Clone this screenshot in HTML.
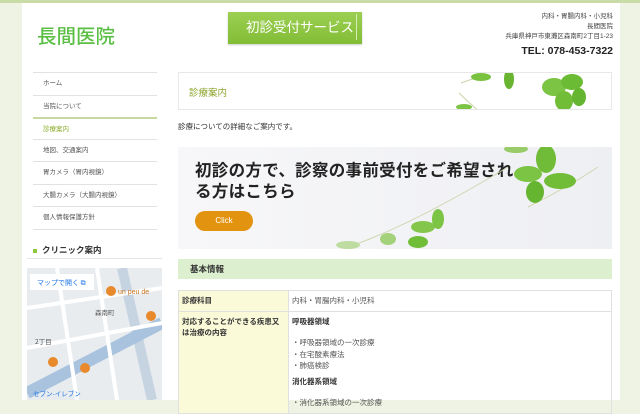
<!DOCTYPE html>
<html><head><meta charset="utf-8"><style>
*{margin:0;padding:0;box-sizing:border-box}
body{width:640px;height:400px;overflow:hidden;background:#eef3e3;font-family:"Liberation Sans","Noto Sans CJK JP",sans-serif;position:relative;color:#333}
.topbar{position:absolute;left:0;top:0;width:640px;height:3px;background:#c9dca8}
.wrap{position:absolute;left:22px;top:3px;width:598px;height:397px;background:#fff}
.a{position:absolute}
.logo{left:37px;top:20px;font-size:19.5px;color:#5cbf45;font-weight:500}
.btn{left:228px;top:12px;width:134px;height:32px;background:linear-gradient(#9ccf52,#82bd36);color:#fff;font-size:13.5px;line-height:32px;padding-left:18px;box-shadow:0 1px 2px rgba(0,0,0,.2)}
.btn:after{content:"";position:absolute;right:5px;top:2px;width:1px;height:26px;background:#d8ecb8}
.info{right:27px;top:12px;text-align:right;font-size:6.5px;line-height:10px;color:#444}
.tel{right:27px;top:45px;font-size:10.5px;font-weight:bold;color:#222}
.menu{left:33px;top:72px;width:124px;border-top:1px solid #e2e2e2}
.menu div{height:22.5px;line-height:22px;font-size:6.5px;color:#555;padding-left:10px;border-bottom:1px solid #e2e2e2}
.menu .act{color:#8aac2a;border-top:2px solid #c8d9a0;margin-top:-1px}
.ct{left:33px;top:244px;font-size:8.5px;font-weight:bold;color:#333}
.ct:before{content:"";display:inline-block;width:4px;height:4px;background:#8dc63f;margin-right:5px;vertical-align:middle}
.map{left:27px;top:268px;width:135px;height:132px;background:#e8ebee;overflow:hidden}
.title{left:178px;top:72px;width:434px;height:38px;border:1px solid #e8e8e8;overflow:hidden}
.title span{position:absolute;left:10px;top:12px;font-size:9.5px;color:#8ea52e}
.desc{left:178px;top:121px;font-size:7.5px;color:#333}
.banner{left:178px;top:147px;width:434px;height:102px;background:linear-gradient(90deg,#f7f7f9,#eeeff3);overflow:hidden}
.banner .t{position:absolute;left:17px;top:14px;font-size:16.5px;font-weight:bold;line-height:21px;color:#222;letter-spacing:.3px}
.click{position:absolute;left:17px;top:64px;width:58px;height:20px;border-radius:10px;background:#e2930f;color:#fff;font-size:8px;text-align:center;line-height:20px}
.kh{left:178px;top:259px;width:434px;height:20px;background:#dcefce;font-size:8.5px;font-weight:bold;line-height:20px;padding-left:12px;color:#333}
table{position:absolute;left:178px;top:290px;width:434px;border-collapse:collapse;font-size:7.5px}
td{border:1px solid #e0e0e0;padding:4px 3px;vertical-align:top;line-height:11.5px}
td.h{width:110px;background:#fafad9;font-weight:bold;color:#333}
td.v{color:#555}
</style></head><body>
<div class="topbar"></div>
<div class="wrap"></div>
<div class="a logo">長間医院</div>
<div class="a btn">初診受付サービス</div>
<div class="a info">内科・胃腸内科・小児科<br>長間医院<br>兵庫県神戸市東灘区森南町2丁目1-23</div>
<div class="a tel">TEL: 078-453-7322</div>
<div class="a menu">
<div>ホーム</div><div>当院について</div><div class="act">診療案内</div><div>地図、交通案内</div><div>胃カメラ（胃内視鏡）</div><div>大腸カメラ（大腸内視鏡）</div><div>個人情報保護方針</div>
</div>
<div class="a ct">クリニック案内</div>
<div class="a" style="left:27px;top:258px;width:135px;height:1px;background:#e5e5e5"></div>
<div class="a map"><svg width="135" height="132">
<rect width="135" height="132" fill="#e9ecef"/>
<path d="M95 0 L125 132" stroke="#c6d4e2" stroke-width="10"/>
<path d="M0 125 L135 55" stroke="#a9c3de" stroke-width="12"/>
<path d="M0 40 L135 20 M0 80 L135 55 M30 0 L50 132 M70 0 L90 132" stroke="#fff" stroke-width="4"/>
<rect x="3" y="6" width="64" height="16" fill="#fff"/>
<text x="10" y="17" font-size="7" fill="#1a73e8" font-family="Noto Sans CJK JP">マップで開く ⧉</text>
<circle cx="84" cy="23" r="5" fill="#e8892b"/><text x="91" y="26" font-size="7" fill="#c8761f">un peu de</text>
<text x="68" y="47" font-size="6.5" fill="#555" font-family="Noto Sans CJK JP">森南町</text>
<text x="8" y="76" font-size="6.5" fill="#555" font-family="Noto Sans CJK JP">2丁目</text>
<circle cx="124" cy="48" r="5" fill="#e8892b"/><circle cx="26" cy="94" r="5" fill="#e8892b"/><circle cx="58" cy="100" r="5" fill="#e8892b"/>
<text x="6" y="128" font-size="6.5" fill="#1a73e8" font-family="Noto Sans CJK JP">セブン-イレブン</text>
</svg></div>
<div class="a title"><span>診療案内</span>
<svg style="position:absolute;left:270px;top:0" width="164" height="38">
<path d="M10 20 Q20 30 30 38 M12 10 Q25 5 40 2" stroke="#c9d3a8" fill="none"/>
<ellipse cx="32" cy="4" rx="10" ry="4" fill="#79c23f"/>
<ellipse cx="60" cy="6" rx="5" ry="10" fill="#69b531"/>
<ellipse cx="105" cy="14" rx="12" ry="9" fill="#7cc443"/>
<ellipse cx="123" cy="9" rx="11" ry="8" fill="#6cbb35"/>
<ellipse cx="115" cy="28" rx="9" ry="10" fill="#71bd38"/>
<ellipse cx="130" cy="24" rx="7" ry="9" fill="#66b530"/>
<ellipse cx="15" cy="34" rx="8" ry="3" fill="#7cc443"/>
</svg></div>
<div class="a desc">診療についての詳細なご案内です。</div>
<div class="a banner">
<div class="t">初診の方で、診察の事前受付をご希望され<br>る方はこちら</div>
<div class="click">Click</div>
<svg style="position:absolute;left:150px;top:0" width="284" height="102">
<path d="M20 100 Q80 80 180 20" stroke="#cfd6b0" fill="none"/>
<path d="M270 20 Q240 40 200 60" stroke="#cfd6b0" fill="none"/>
<ellipse cx="218" cy="12" rx="10" ry="14" fill="#70bb37"/>
<ellipse cx="200" cy="27" rx="14" ry="8" fill="#7cc443"/>
<ellipse cx="232" cy="34" rx="16" ry="8" fill="#71bd38"/>
<ellipse cx="207" cy="45" rx="9" ry="11" fill="#66b530"/>
<ellipse cx="188" cy="2" rx="12" ry="4" fill="#9acb6a"/>
<ellipse cx="95" cy="80" rx="12" ry="6" fill="#84c64c"/>
<ellipse cx="110" cy="72" rx="6" ry="10" fill="#7cc443"/>
<ellipse cx="90" cy="95" rx="10" ry="6" fill="#71bd38"/>
<ellipse cx="60" cy="92" rx="8" ry="6" fill="#a3d27a"/>
<ellipse cx="20" cy="98" rx="12" ry="4" fill="#bfdca0"/>
</svg>
</div>
<div class="a kh">基本情報</div>
<table>
<tr><td class="h">診療科目</td><td class="v">内科・胃腸内科・小児科</td></tr>
<tr><td class="h">対応することができる疾患又は治療の内容</td><td class="v"><b style="color:#333">呼吸器領域</b><div style="height:10px"></div>・呼吸器領域の一次診療<br>・在宅酸素療法<br>・肺癌検診<div style="margin-top:4px"><b style="color:#333">消化器系領域</b></div><div style="height:10px"></div>・消化器系領域の一次診療</td></tr>
</table>
</body></html>
